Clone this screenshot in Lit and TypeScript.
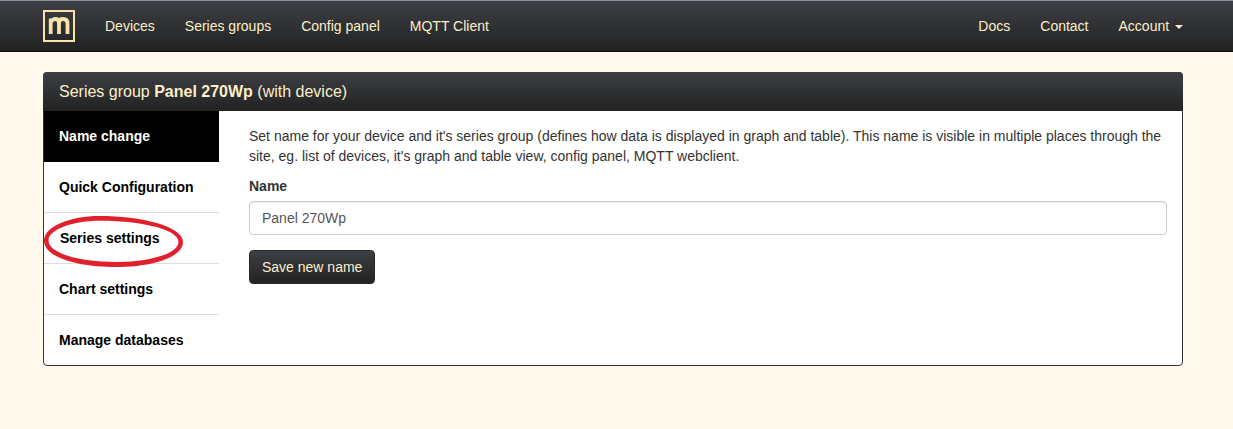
import { LitElement, html, css } from "lit";
import { customElement } from "lit/decorators.js";

@customElement("app-root")
export class AppRoot extends LitElement {
  static styles = css`
    :host {
      display: block;
      min-height: 429px;
      background: #fff9ee;
      font-family: "Liberation Sans", Arial, sans-serif;
      font-size: 14px;
      line-height: 20px;
      color: #333;
    }

    .navbar {
      height: 50px;
      border-top: 1px solid #8d8f94;
      border-bottom: 1px solid #0c0c0c;
      background: linear-gradient(to bottom, #3c3f44 0%, #222 100%);
      display: flex;
      align-items: center;
      padding: 0 35px 0 43px;
    }

    .logo {
      width: 32px;
      height: 32px;
      margin-right: 15px;
      display: block;
      flex: none;
    }

    .navbar a {
      color: #fdeec9;
      padding: 0 15px;
      white-space: nowrap;
    }

    .spacer {
      flex: 1;
    }

    .caret {
      display: inline-block;
      width: 0;
      height: 0;
      margin-left: 2px;
      vertical-align: middle;
      border-top: 4px solid #fdeec9;
      border-left: 4px solid transparent;
      border-right: 4px solid transparent;
    }

    .panel {
      position: relative;
      width: 1140px;
      height: 294px;
      box-sizing: border-box;
      margin: 20px 0 0 43px;
      border: 1px solid #333;
      border-radius: 4px;
      background: #fff;
      display: flex;
      flex-direction: column;
    }

    .panel-heading {
      height: 39px;
      flex: none;
      margin: -1px -1px 0;
      padding: 0 16px;
      border-radius: 4px 4px 0 0;
      background: linear-gradient(to bottom, #3c3f44 0%, #222 100%);
      color: #fdeec9;
      font-size: 16px;
      line-height: 39px;
    }

    .panel-body {
      flex: 1;
      display: flex;
      min-height: 0;
    }

    .tabs {
      width: 175px;
      flex: none;
    }

    .tab {
      height: 51px;
      box-sizing: border-box;
      padding: 15px 15px 0;
      font-weight: 700;
      color: #000;
      border-bottom: 1px solid #ddd;
    }

    .tab:last-child {
      border-bottom: 0;
    }

    .tab.active {
      background: #000;
      color: #fff;
      border-bottom: 0;
    }

    .tab.circled {
      padding-left: 16px;
    }

    .content {
      flex: 1;
      padding: 15px 15px 0 30px;
    }

    .content p {
      margin: 0 0 10px;
    }

    label {
      display: block;
      font-weight: 700;
      margin-bottom: 5px;
    }

    .input {
      height: 34px;
      box-sizing: border-box;
      border: 1px solid #ccc;
      border-radius: 4px;
      padding: 6px 12px;
      color: #555;
      box-shadow: inset 0 1px 1px rgba(0, 0, 0, 0.075);
      margin-bottom: 15px;
    }

    .btn {
      display: inline-block;
      height: 34px;
      box-sizing: border-box;
      padding: 6px 12px;
      border: 1px solid #2a2a2a;
      border-radius: 4px;
      background: linear-gradient(to bottom, #3c3f44 0%, #222 100%);
      color: #fdeec9;
    }

    .circle {
      position: absolute;
      left: 0;
      top: 142px;
      width: 142px;
      height: 54px;
      overflow: visible;
    }
  `;

  render() {
    const tabs = ["Name change", "Quick Configuration", "Series settings", "Chart settings", "Manage databases"];
    return html`
      <nav class="navbar">
        <svg class="logo" viewBox="0 0 32 32">
          <rect x="1" y="1" width="30" height="30" fill="none" stroke="#f9e3ab" stroke-width="2" />
          <path d="M7.7 24V8.5M7.7 12C9 10 11 9 12.5 9C14.8 9 16 10.5 16 13V24M16 13C16 10.5 17.5 9 20 9C23 9 24.5 10.5 24.5 13.5V24" fill="none" stroke="#f9e3ab" stroke-width="3.8" />
        </svg>
        <a>Devices</a>
        <a>Series groups</a>
        <a>Config panel</a>
        <a>MQTT Client</a>
        <span class="spacer"></span>
        <a>Docs</a>
        <a>Contact</a>
        <a>Account <span class="caret"></span></a>
      </nav>
      <section class="panel">
        <div class="panel-heading">Series group <b>Panel 270Wp</b> (with device)</div>
        <div class="panel-body">
          <div class="tabs">
            ${tabs.map((t, i) => html`<div class="tab ${i === 0 ? "active" : ""} ${i === 2 ? "circled" : ""}">${t}</div>`)}
          </div>
          <div class="content">
            <p>Set name for your device and it's series group (defines how data is displayed in graph and table). This name is visible in multiple places through the site, eg. list of devices, it's graph and table view, config panel, MQTT webclient.</p>
            <label>Name</label>
            <div class="input">Panel 270Wp</div>
            <span class="btn">Save new name</span>
          </div>
        </div>
        <svg class="circle" viewBox="0 0 142 54">
          <path fill-rule="evenodd" fill="#e0202c" d="M0 25C1 11 27 1 55 1C97 1 139 11 139 27C139 43 106 52 73 52C33 52 -1 42 0 25ZM4.5 25C5 14 30 5.7 55 5.7C93 5.7 134.5 13 134.5 27C134.5 39 104 47 73 47C37 47 4 39 4.5 25Z" />
        </svg>
      </section>
    `;
  }
}
